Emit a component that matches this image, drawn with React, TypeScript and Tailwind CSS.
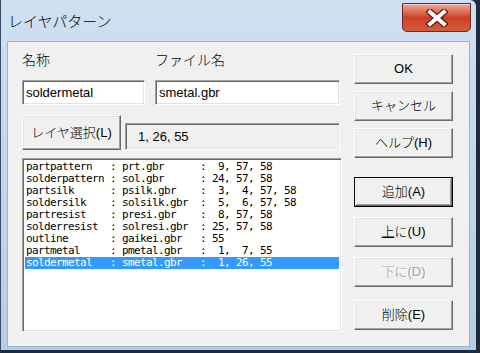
import React from 'react';

const rows: [string, string, number[]][] = [
  ['partpattern', 'prt.gbr', [9, 57, 58]],
  ['solderpattern', 'sol.gbr', [24, 57, 58]],
  ['partsilk', 'psilk.gbr', [3, 4, 57, 58]],
  ['soldersilk', 'solsilk.gbr', [5, 6, 57, 58]],
  ['partresist', 'presi.gbr', [8, 57, 58]],
  ['solderresist', 'solresi.gbr', [25, 57, 58]],
  ['outline', 'gaikei.gbr', [55]],
  ['partmetal', 'pmetal.gbr', [1, 7, 55]],
  ['soldermetal', 'smetal.gbr', [1, 26, 55]],
];

const fmt = (name: string, file: string, nums: number[]) =>
  name.padEnd(14) + ': ' + file.padEnd(13) + ': ' + nums.map((n) => String(n).padStart(2)).join(', ');

const ui = "font-['Liberation_Sans','Noto_Sans_CJK_JP',sans-serif] font-light";

const sunken =
  'border border-t-[#a0a0a0] border-l-[#a0a0a0] border-b-white border-r-white shadow-[inset_1px_1px_0_#696969,inset_-1px_-1px_0_#e3e3e3]';

const raised =
  'border border-t-white border-l-white border-b-[#696969] border-r-[#696969] shadow-[inset_-1px_-1px_0_#a0a0a0,inset_1px_1px_0_#e3e3e3]';

const Btn: React.FC<{ label: React.ReactNode; className?: string; disabled?: boolean; isDefault?: boolean }> = ({
  label,
  className = '',
  disabled,
  isDefault,
}) => (
  <div className={`${isDefault ? 'border border-black' : ''} ${className}`}>
    <div
      className={`${raised} bg-[#f0f0f0] flex items-center justify-center text-[13px] ${ui} ${
        isDefault ? 'h-[28px]' : 'h-[30px]'
      } ${disabled ? 'text-[#a0a0a0] [text-shadow:1px_1px_0_#fff]' : 'text-black'}`}
    >
      {label}
    </div>
  </div>
);

export default function App() {
  return (
    <div className="w-[480px] h-[353px] bg-[#1c2b3e] overflow-hidden">
      <div className="w-[476px] h-[350px] flex flex-col border-l border-[#3a4d66] bg-gradient-to-b from-[#cfe0f1] via-[#c2d7ec] to-[#b6cde6] rounded-tr-[6px]">
        {/* title bar */}
        <div className="h-[41px] flex items-start justify-between shrink-0">
          <div className="pl-[7px] pt-[11px] text-[15px] text-black font-['Noto_Sans_CJK_JP',sans-serif] font-light leading-[20px]">
            レイヤパターン
          </div>
          <div className="mt-[3px] mr-[5px] w-[69px] h-[29px] rounded-b-[5px] border border-[#6b2a22] bg-gradient-to-b from-[#e9a898] via-[#cf3f26] to-[#d75a3c] flex items-center justify-center shadow-[inset_0_1px_0_#f6cfc4]">
            <svg width="24" height="18" viewBox="0 0 24 18">
              <path d="M5 3 L19 15 M19 3 L5 15" stroke="#5a1c14" strokeWidth="6.5" strokeLinecap="square" />
              <path d="M5 3 L19 15 M19 3 L5 15" stroke="#ffffff" strokeWidth="4" strokeLinecap="square" />
            </svg>
          </div>
        </div>

        {/* client area */}
        <div className="ml-[6px] mr-[6px] h-[306px] border border-[#9fb2c6] bg-[#f0f0f0] flex pl-[14px]">
          <div className="w-[320px] flex flex-col">
            <div className="flex mt-[9px] h-[16px] leading-[16px] text-[14px] text-black font-['Noto_Sans_CJK_JP',sans-serif] font-light">
              <div className="w-[133px]">名称</div>
              <div>ファイル名</div>
            </div>
            <div className="flex mt-[13px] gap-[10px]">
              <div className={`${sunken} bg-white w-[123px] h-[25px] pl-[3px] flex items-center text-[13px] ${ui}`}>soldermetal</div>
              <div className={`${sunken} bg-white w-[185px] h-[25px] pl-[3px] flex items-center text-[13px] ${ui}`}>smetal.gbr</div>
            </div>
            <div className="flex mt-[10px] items-end">
              <Btn label="レイヤ選択(L)" className="w-[99px] [&>div]:h-[35px]" />
              <div className={`${sunken} ml-[4px] bg-[#f0f0f0] w-[215px] h-[27px] pl-[12px] flex items-center text-[13px] ${ui}`}>
                1, 26, 55
              </div>
            </div>
            <div className={`${sunken} bg-white mt-[8px] w-[320px] h-[174px] p-[2px]`}>
              <div className="font-['DejaVu_Sans_Mono',monospace] text-[11px] leading-[12px] tracking-[-0.62px]">
                {rows.map(([n, f, nums], i) => (
                  <div
                    key={n}
                    className={`whitespace-pre h-[12px] pl-[1px] ${i === rows.length - 1 ? 'bg-[#3399ff] text-white' : 'text-black'}`}
                  >
                    {fmt(n, f, nums)}
                  </div>
                ))}
              </div>
            </div>
          </div>

          <div className="ml-[12px] w-[99px] flex flex-col">
            <Btn label="OK" className="mt-[12px]" />
            <Btn label="キャンセル" className="mt-[7px]" />
            <Btn label="ヘルプ(H)" className="mt-[7px]" />
            <Btn label="追加(A)" className="mt-[19px]" isDefault />
            <Btn
              label={
                <span>
                  <span className="underline">上</span>に(U)
                </span>
              }
              className="mt-[10px]"
            />
            <Btn label="下に(D)" className="mt-[10px]" disabled />
            <Btn label="削除(E)" className="mt-[13px]" />
          </div>
        </div>
      </div>
    </div>
  );
}
